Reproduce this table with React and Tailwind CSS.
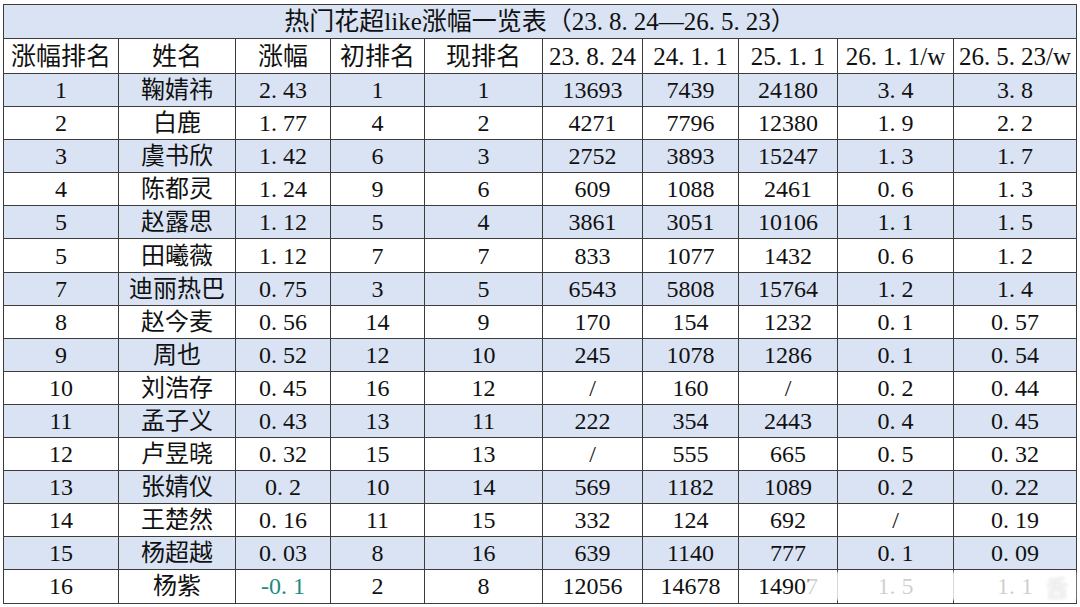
import React from "react";

// 热门花超 like 涨幅一览表
const cols = [115, 117, 95, 94, 118, 100, 96, 99, 116, 123];

const headers = ["涨幅排名", "姓名", "涨幅", "初排名", "现排名", "23.8.24", "24.1.1", "25.1.1", "26.1.1/w", "26.5.23/w"];

const rows = [
  ["1", "鞠婧祎", "2.43", "1", "1", "13693", "7439", "24180", "3.4", "3.8"],
  ["2", "白鹿", "1.77", "4", "2", "4271", "7796", "12380", "1.9", "2.2"],
  ["3", "虞书欣", "1.42", "6", "3", "2752", "3893", "15247", "1.3", "1.7"],
  ["4", "陈都灵", "1.24", "9", "6", "609", "1088", "2461", "0.6", "1.3"],
  ["5", "赵露思", "1.12", "5", "4", "3861", "3051", "10106", "1.1", "1.5"],
  ["5", "田曦薇", "1.12", "7", "7", "833", "1077", "1432", "0.6", "1.2"],
  ["7", "迪丽热巴", "0.75", "3", "5", "6543", "5808", "15764", "1.2", "1.4"],
  ["8", "赵今麦", "0.56", "14", "9", "170", "154", "1232", "0.1", "0.57"],
  ["9", "周也", "0.52", "12", "10", "245", "1078", "1286", "0.1", "0.54"],
  ["10", "刘浩存", "0.45", "16", "12", "/", "160", "/", "0.2", "0.44"],
  ["11", "孟子义", "0.43", "13", "11", "222", "354", "2443", "0.4", "0.45"],
  ["12", "卢昱晓", "0.32", "15", "13", "/", "555", "665", "0.5", "0.32"],
  ["13", "张婧仪", "0.2", "10", "14", "569", "1182", "1089", "0.2", "0.22"],
  ["14", "王楚然", "0.16", "11", "15", "332", "124", "692", "/", "0.19"],
  ["15", "杨超越", "0.03", "8", "16", "639", "1140", "777", "0.1", "0.09"],
  ["16", "杨紫", "-0.1", "2", "8", "12056", "14678", "14907", "1.5", "1.1"],
];

const cell = "border border-[#3c3c3c] text-center align-middle p-0 leading-none";

// 宋体的小数点是半角宽，这里给点号补一点空隙
const Num = ({ v }) => {
  const parts = String(v).split(".");
  return parts.map((p, i) => (
    <React.Fragment key={i}>
      {p}
      {i < parts.length - 1 && <span className="pr-[6px]">.</span>}
    </React.Fragment>
  ));
};

export default function App() {
  return (
    <div className="relative w-[1080px] h-[607px] bg-white pl-[3px] pt-[4px] overflow-hidden font-['Liberation_Serif','Noto_Sans_CJK_SC',serif] text-[24px] text-[#111]">
      <table className="border-collapse table-fixed w-[1073px]">
        <colgroup>
          {cols.map((w, i) => (
            <col key={i} style={{ width: w }} />
          ))}
        </colgroup>
        <tbody>
          <tr className="h-[34px] bg-[#dae3f3]">
            <td colSpan={10} className={`${cell} text-[25px]`}>
              热门花超like涨幅一览表（<Num v="23.8.24" />—<Num v="26.5.23" />）
            </td>
          </tr>
          <tr className="h-[35px] bg-white">
            {headers.map((h, i) => (
              <td key={i} className={`${cell} whitespace-nowrap text-[25px]`}>
                <Num v={h} />
              </td>
            ))}
          </tr>
          {rows.map((r, ri) => (
            <tr key={ri} className={`h-[33.1px] ${ri % 2 === 0 ? "bg-[#dae3f3]" : "bg-white"}`}>
              {r.map((v, ci) => (
                <td
                  key={ci}
                  className={`${cell} whitespace-nowrap ${v === "-0.1" ? "text-[#1e8a80]" : ""}`}
                >
                  <Num v={v} />
                </td>
              ))}
            </tr>
          ))}
        </tbody>
      </table>

      {/* 水印 */}
      <div className="absolute left-[808px] top-[572px] w-[268px] h-[28px] bg-white/80 blur-[1px] flex items-center justify-end pr-[8px]">
        <span className="text-[22px] text-white [text-shadow:0_0_2px_#999] font-['Noto_Sans_CJK_SC',sans-serif]">舌</span>
      </div>
    </div>
  );
}
